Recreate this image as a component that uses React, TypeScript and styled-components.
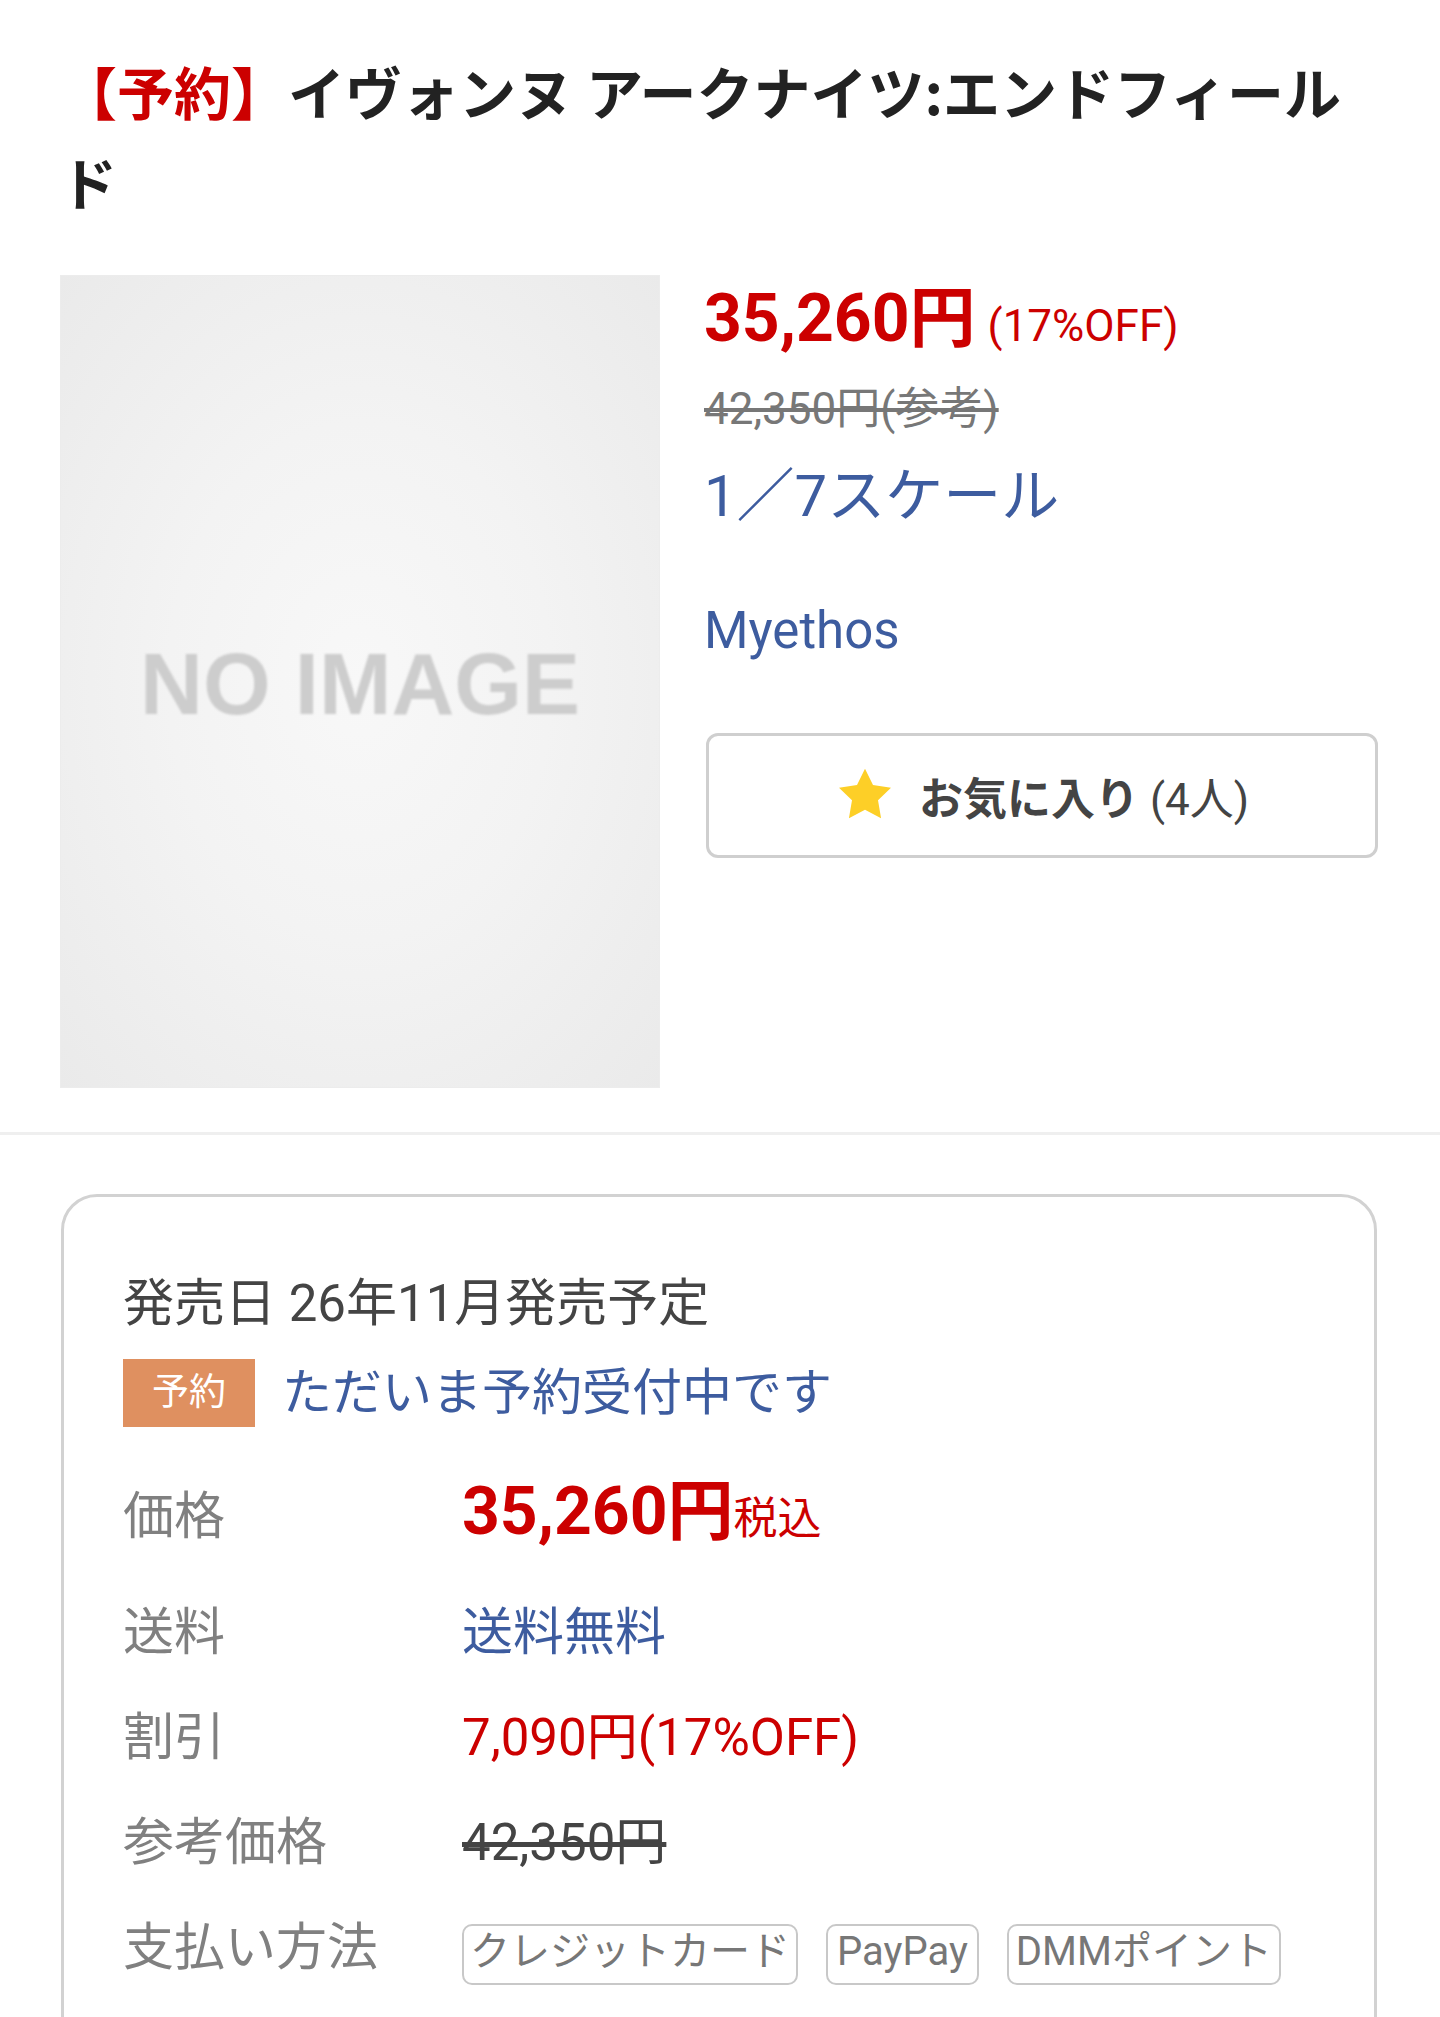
import React from 'react'
import styled, {createGlobalStyle} from 'styled-components'

const GlobalStyle = createGlobalStyle`
  html, body {
    margin: 0;
    padding: 0;
    background: #fff;
  }
  body {
    font-family: Roboto, "Noto Sans CJK JP", sans-serif;
    color: #444;
  }
`

const Page = styled.main`
  width: 1440px;
  height: 2017px;
  overflow: hidden;
`

const Head = styled.header`
  padding: 45px 60px 0;
`

const Title = styled.h1`
  margin: 0;
  font-family: "Noto Sans CJK JP", sans-serif;
  font-size: 57px;
  line-height: 90px;
  font-weight: 700;
  color: #222;
`

const Reserve = styled.span`
  color: #cc0000;
`

const Summary = styled.section`
  display: flex;
  gap: 44px;
  padding: 50px 60px 0;
`

const NoImage = styled.div`
  flex: none;
  width: 600px;
  height: 813px;
  display: flex;
  align-items: center;
  justify-content: center;
  background: radial-gradient(ellipse at center, #f8f8f8 0%, #f3f3f3 45%, #eaeaea 100%);
  box-shadow: inset 0 0 0 1px #ececec;
`

const NoImageText = styled.span`
  font-family: "Liberation Sans", Arial, sans-serif;
  font-weight: 700;
  font-size: 87px;
  color: #cdcdcd;
  filter: blur(1px);
  margin-top: 4px;
`

const Info = styled.div`
  flex: 1;
  min-width: 0;
  display: flex;
  flex-direction: column;
  padding-top: 4px;
`

const Price = styled.div`
  color: #cc0000;
  font-size: 66px;
  line-height: 80px;
  font-weight: 700;
  white-space: nowrap;
`

const Off = styled.span`
  font-size: 44px;
  font-weight: 400;
  margin-left: 12px;
`

const ListPrice = styled.div`
  margin-top: 13px;
  color: #777;
  font-size: 44px;
  line-height: 60px;
  text-decoration: line-through;
`

const Link = styled.a<{$size: number; $space: number}>`
  display: block;
  margin-top: ${p => p.$space}px;
  color: #3d5c9f;
  font-size: ${p => p.$size}px;
  line-height: ${p => Math.round(p.$size * 1.37)}px;
  text-decoration: none;
`

const FavButton = styled.button`
  margin: 67px 2px 0;
  height: 125px;
  box-sizing: border-box;
  border: 3px solid #cfcfcf;
  border-radius: 12px;
  background: #fff;
  display: flex;
  align-items: center;
  justify-content: center;
  gap: 24px;
  font-family: Roboto, "Noto Sans CJK JP", sans-serif;
  font-size: 44px;
  color: #444;
  padding: 0;
`

const FavLabel = styled.span`
  font-weight: 700;
  margin-top: 8px;
`

const FavCount = styled.span`
  font-weight: 400;
`

const Divider = styled.hr`
  margin: 44px 0 0;
  border: none;
  height: 3px;
  background: #efefef;
`

const Card = styled.section`
  margin: 59px 63px 0 61px;
  border: 3px solid #d2d2d2;
  border-radius: 36px;
  padding: 72px 59px 200px;
`

const Release = styled.div`
  font-size: 51px;
  line-height: 70px;
  color: #444;
`

const Status = styled.div`
  margin-top: 19px;
  display: flex;
  align-items: center;
  gap: 27px;
`

const Badge = styled.span`
  height: 68px;
  padding: 0 29px;
  background: #df9060;
  color: #fff;
  font-size: 37px;
  line-height: 68px;
`

const StatusText = styled.span`
  color: #3d5c9f;
  font-size: 50px;
  line-height: 70px;
`

const Row = styled.div<{$space: number}>`
  display: grid;
  grid-template-columns: 339px 1fr;
  align-items: baseline;
  margin-top: ${p => p.$space}px;
  font-size: 51px;
  line-height: 70px;
`

const Label = styled.span`
  color: #808080;
`

const Value = styled.span<{$tone?: 'red' | 'blue' | 'strike'}>`
  color: ${p => (p.$tone === 'red' ? '#cc0000' : p.$tone === 'blue' ? '#3d5c9f' : '#444')};
  text-decoration: ${p => (p.$tone === 'strike' ? 'line-through' : 'none')};
  white-space: nowrap;
`

const BigPrice = styled.span`
  font-size: 66px;
  line-height: 80px;
  font-weight: 700;
`

const Tax = styled.span`
  font-size: 44px;
  font-weight: 400;
`

const Tags = styled.div`
  display: flex;
  align-items: baseline;
  gap: 28px;
`

const Tag = styled.span<{$pad?: number}>`
  height: 61px;
  box-sizing: border-box;
  border: 2px solid #c8c8c8;
  border-radius: 10px;
  padding: 0 ${p => p.$pad ?? 6}px 5px;
  font-size: 40px;
  line-height: 52px;
  color: #777;
  white-space: nowrap;
`

const Star = () => (
  <svg width="60" height="58" viewBox="0 0 24 23" aria-hidden="true">
    <path
      d="M12 0.6l3.2 6.5 7.2 1.05-5.2 5.07 1.23 7.16L12 17l-6.43 3.38 1.23-7.16L1.6 8.15l7.2-1.05z"
      fill="#fdcf27"
    />
  </svg>
)

const App = () => (
  <Page>
    <GlobalStyle />
    <Head>
      <Title>
        <Reserve>【予約】</Reserve>イヴォンヌ アークナイツ:エンドフィールド
      </Title>
    </Head>

    <Summary>
      <NoImage>
        <NoImageText>NO IMAGE</NoImageText>
      </NoImage>
      <Info>
        <Price>
          35,260円<Off>(17%OFF)</Off>
        </Price>
        <ListPrice>42,350円(参考)</ListPrice>
        <Link href="#" $size={58} $space={18}>1／7スケール</Link>
        <Link href="#" $size={51} $space={60}>Myethos</Link>
        <FavButton type="button">
          <Star />
          <span>
            <FavLabel>お気に入り</FavLabel> <FavCount>(4人)</FavCount>
          </span>
        </FavButton>
      </Info>
    </Summary>

    <Divider />

    <Card>
      <Release>発売日 26年11月発売予定</Release>
      <Status>
        <Badge>予約</Badge>
        <StatusText>ただいま予約受付中です</StatusText>
      </Status>

      <Row $space={44}>
        <Label>価格</Label>
        <Value $tone="red">
          <BigPrice>35,260円</BigPrice>
          <Tax>税込</Tax>
        </Value>
      </Row>
      <Row $space={44}>
        <Label>送料</Label>
        <Value $tone="blue">送料無料</Value>
      </Row>
      <Row $space={35}>
        <Label>割引</Label>
        <Value $tone="red">7,090円(17%OFF)</Value>
      </Row>
      <Row $space={35}>
        <Label>参考価格</Label>
        <Value $tone="strike">42,350円</Value>
      </Row>
      <Row $space={35}>
        <Label>支払い方法</Label>
        <Tags>
          <Tag>クレジットカード</Tag>
          <Tag $pad={9}>PayPay</Tag>
          <Tag $pad={7}>DMMポイント</Tag>
        </Tags>
      </Row>
    </Card>
  </Page>
)

export default App
